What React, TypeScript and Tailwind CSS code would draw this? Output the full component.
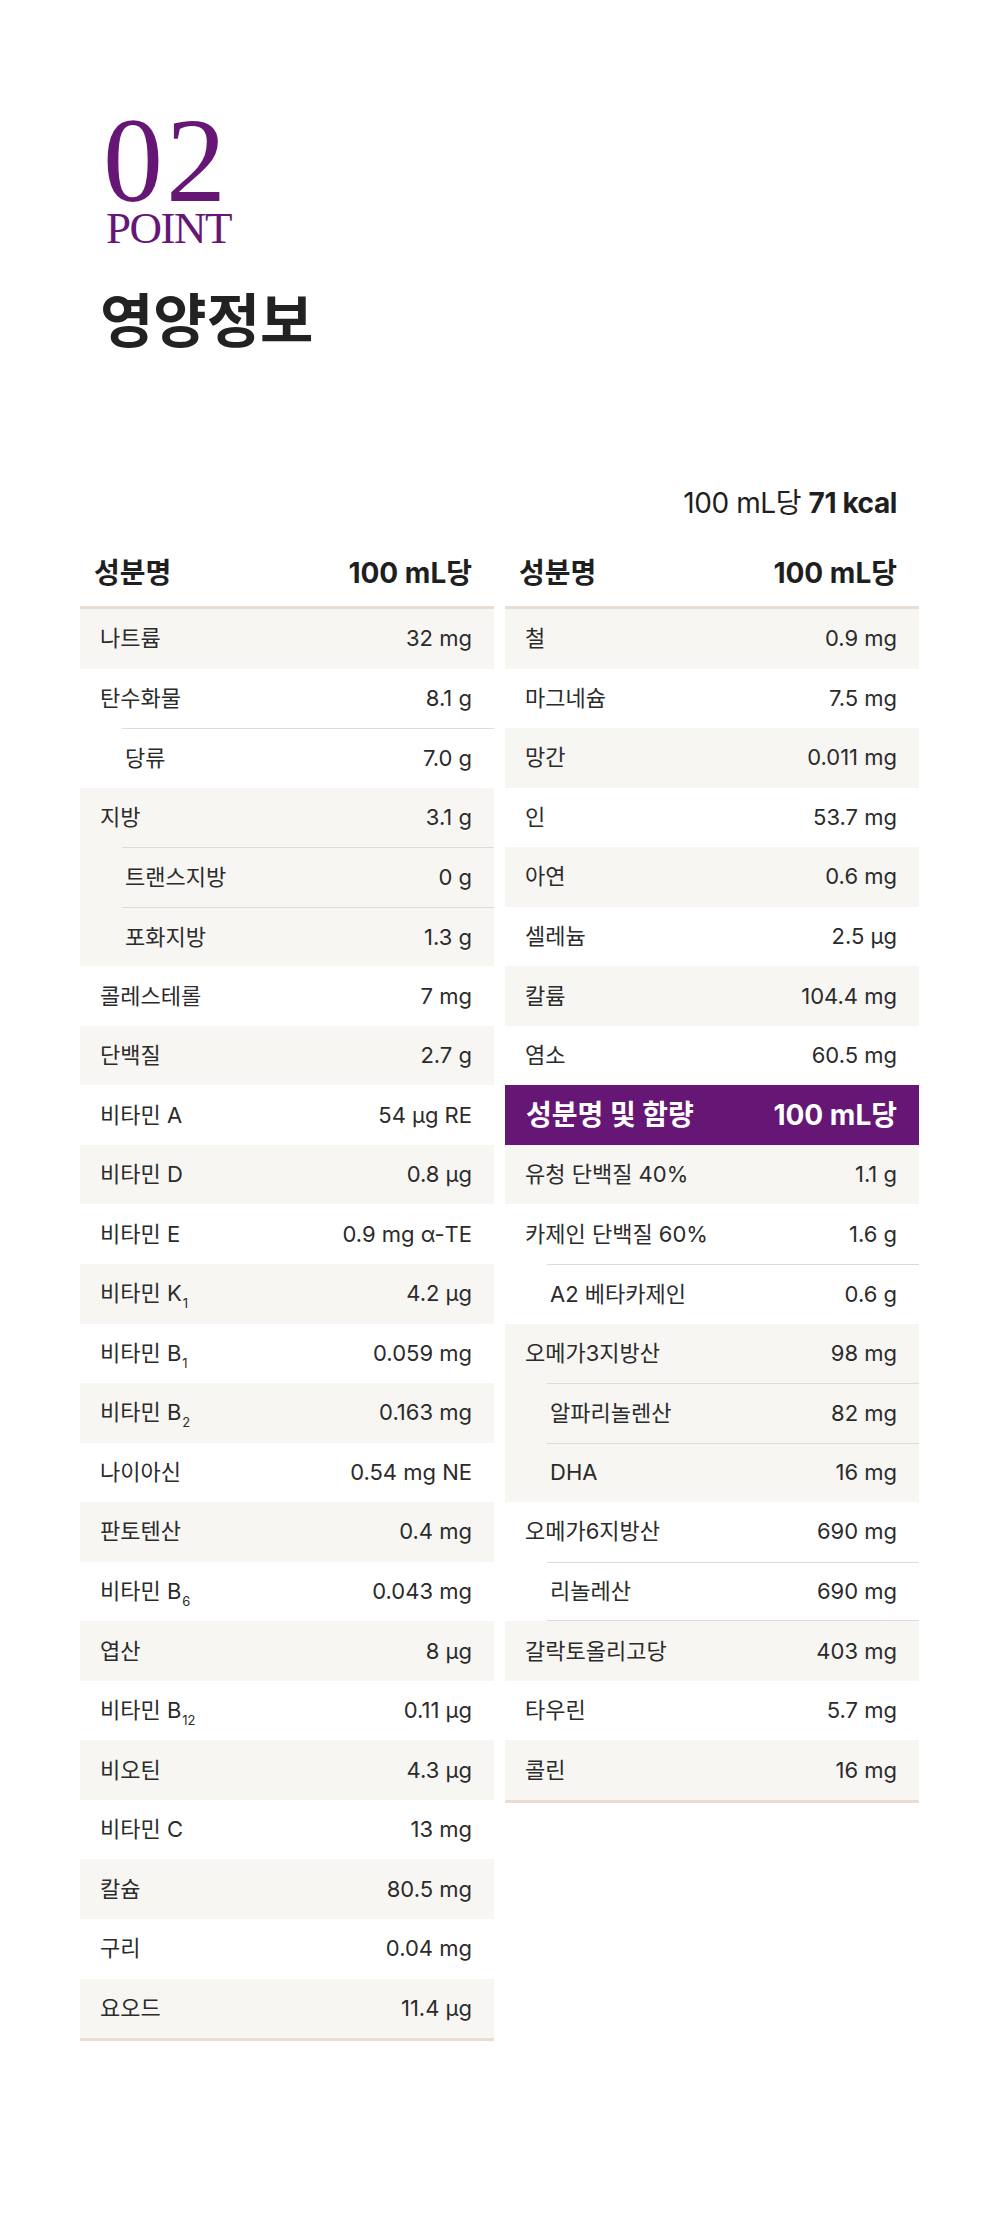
import React from 'react';

type Item = {
	name: React.ReactNode;
	value: string;
	subs?: { name: React.ReactNode; value: string; lineBelow?: boolean }[];
};

const Sub = ({ children }: { children: React.ReactNode }) => (
	<span className="relative top-[7px] ml-[1px] text-[13px]">{children}</span>
);

const leftItems: Item[] = [
	{ name: '나트륨', value: '32 mg' },
	{ name: '탄수화물', value: '8.1 g', subs: [{ name: '당류', value: '7.0 g' }] },
	{
		name: '지방',
		value: '3.1 g',
		subs: [
			{ name: '트랜스지방', value: '0 g' },
			{ name: '포화지방', value: '1.3 g' },
		],
	},
	{ name: '콜레스테롤', value: '7 mg' },
	{ name: '단백질', value: '2.7 g' },
	{ name: '비타민 A', value: '54 μg RE' },
	{ name: '비타민 D', value: '0.8 μg' },
	{ name: '비타민 E', value: '0.9 mg α-TE' },
	{ name: <>비타민 K<Sub>1</Sub></>, value: '4.2 μg' },
	{ name: <>비타민 B<Sub>1</Sub></>, value: '0.059 mg' },
	{ name: <>비타민 B<Sub>2</Sub></>, value: '0.163 mg' },
	{ name: '나이아신', value: '0.54 mg NE' },
	{ name: '판토텐산', value: '0.4 mg' },
	{ name: <>비타민 B<Sub>6</Sub></>, value: '0.043 mg' },
	{ name: '엽산', value: '8 μg' },
	{ name: <>비타민 B<Sub>12</Sub></>, value: '0.11 μg' },
	{ name: '비오틴', value: '4.3 μg' },
	{ name: '비타민 C', value: '13 mg' },
	{ name: '칼슘', value: '80.5 mg' },
	{ name: '구리', value: '0.04 mg' },
	{ name: '요오드', value: '11.4 μg' },
];

const mineralItems: Item[] = [
	{ name: '철', value: '0.9 mg' },
	{ name: '마그네슘', value: '7.5 mg' },
	{ name: '망간', value: '0.011 mg' },
	{ name: '인', value: '53.7 mg' },
	{ name: '아연', value: '0.6 mg' },
	{ name: '셀레늄', value: '2.5 μg' },
	{ name: '칼륨', value: '104.4 mg' },
	{ name: '염소', value: '60.5 mg' },
];

const extraItems: Item[] = [
	{ name: '유청 단백질 40%', value: '1.1 g' },
	{
		name: '카제인 단백질 60%',
		value: '1.6 g',
		subs: [{ name: 'A2 베타카제인', value: '0.6 g' }],
	},
	{
		name: '오메가3지방산',
		value: '98 mg',
		subs: [
			{ name: '알파리놀렌산', value: '82 mg' },
			{ name: 'DHA', value: '16 mg' },
		],
	},
	{
		name: '오메가6지방산',
		value: '690 mg',
		subs: [{ name: '리놀레산', value: '690 mg', lineBelow: true }],
	},
	{ name: '갈락토올리고당', value: '403 mg' },
	{ name: '타우린', value: '5.7 mg' },
	{ name: '콜린', value: '16 mg' },
];

const Row = ({ item, striped }: { item: Item; striped: boolean }) => (
	<div className={striped ? 'bg-[#f7f6f3]' : 'bg-white'}>
		<div className="flex h-[59.55px] items-center justify-between pl-[20px] pr-[22px]">
			<span>{item.name}</span>
			<span>{item.value}</span>
		</div>
		{item.subs?.map((s, i) => (
			<div
				key={i}
				className={
					'ml-[42px] flex h-[59.55px] items-center justify-between border-t border-[#dcdcdc] pl-[3px] pr-[22px]' +
					(s.lineBelow ? ' border-b' : '')
				}
			>
				<span>{s.name}</span>
				<span>{s.value}</span>
			</div>
		))}
	</div>
);

const TableHead = () => (
	<div className="flex h-[62px] items-center justify-between border-b-[3px] border-[#eadcd0] pb-[8px] pl-[14px] pr-[22px] text-[28px] font-bold text-[#1f1f1f]">
		<span>성분명</span>
		<span>100 mL당</span>
	</div>
);

export default function App() {
	return (
		<div className="min-h-[2240px] w-[1000px] bg-white font-['Inter','Noto_Sans_CJK_KR',sans-serif] text-[#2b2b2b]">
			<div className="pl-[100px] pt-[115px]">
				<div className="pl-[3px] font-['Liberation_Serif',serif] text-[120px] leading-[92px] tracking-[3px] text-[#661775]">
					02
				</div>
				<div className="mt-[3px] pl-[6px] font-['Liberation_Serif',serif] text-[45px] leading-[36px] tracking-[-1.5px] text-[#661775]">
					POINT
				</div>
				<h1 className="mt-[46px] text-[58px] font-bold leading-none text-[#222222]">
					영양정보
				</h1>
			</div>

			<div className="ml-[80px] mt-[133px] flex h-[40px] w-[839px] items-center justify-end pr-[22px] text-[28px] tracking-[-0.4px] text-[#1f1f1f]">
				<span>
					100 mL당 <b className="font-bold">71 kcal</b>
				</span>
			</div>

			<div className="mt-[24px] flex gap-[11px] px-[80px] text-[22px]">
				<div className="w-[414px]">
					<TableHead />
					<div className="border-b-[3px] border-[#eadcd0]">
						{leftItems.map((item, i) => (
							<Row key={i} item={item} striped={i % 2 === 0} />
						))}
					</div>
				</div>

				<div className="w-[414px]">
					<TableHead />
					{mineralItems.map((item, i) => (
						<Row key={i} item={item} striped={i % 2 === 0} />
					))}
					<div className="flex h-[59.55px] items-center justify-between bg-[#661775] pl-[21px] pr-[22px] text-[28px] font-bold text-white">
						<span>성분명 및 함량</span>
						<span>100 mL당</span>
					</div>
					<div className="border-b-[3px] border-[#eadcd0]">
						{extraItems.map((item, i) => (
							<Row key={i} item={item} striped={i % 2 === 0} />
						))}
					</div>
				</div>
			</div>
		</div>
	);
}
